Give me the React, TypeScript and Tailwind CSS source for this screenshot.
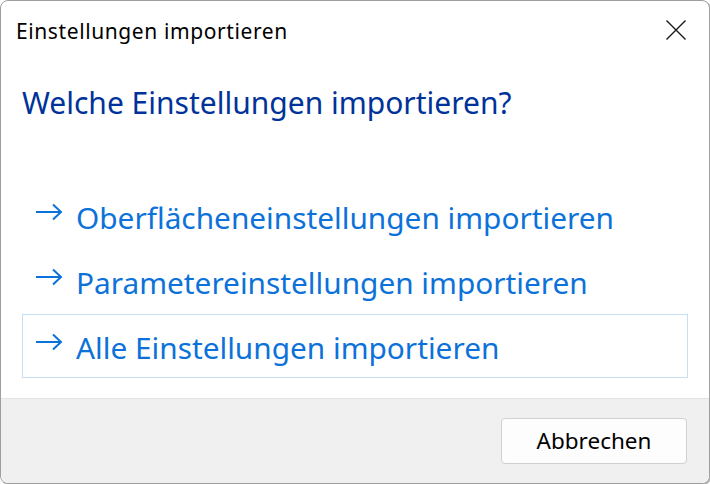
const options = [
  "Oberflächeneinstellungen importieren",
  "Parametereinstellungen importieren",
  "Alle Einstellungen importieren",
];

function Arrow() {
  return (
    <svg width="28" height="20" viewBox="0 0 28 20" className="-mt-[8px] shrink-0" fill="none">
      <path d="M1 10H26M18 2.5L26 10L18 17.5" stroke="currentColor" strokeWidth="2" />
    </svg>
  );
}

function CloseIcon() {
  return (
    <svg width="20" height="20" viewBox="0 0 20 20" fill="none" className="-mt-[3px]">
      <path d="M0.5 0.5L19.5 19.5M19.5 0.5L0.5 19.5" stroke="#1a1a1a" strokeWidth="1.4" />
    </svg>
  );
}

export default function App() {
  return (
    <div className="h-[484px] w-[710px] bg-white font-['Noto_Sans',sans-serif]">
      <div className="flex h-full flex-col overflow-hidden rounded-[8px] border border-[#9e9e9e] bg-white shadow-[1px_1px_0_#b8b8b8]">
        <div className="flex h-[61px] shrink-0 items-center justify-between pl-[15px] pr-[23px]">
          <span className="text-[21px] tracking-[0.6px] text-black">Einstellungen importieren</span>
          <CloseIcon />
        </div>
        <div className="flex-1 px-[21px]">
          <h1 className="mt-[17px] text-[30px] leading-[48px] text-[#003399]">
            Welche Einstellungen importieren?
          </h1>
          <div className="mt-[57px] flex flex-col gap-[1px]">
            {options.map((label, i) => (
              <div
                key={label}
                className={`flex h-[64px] items-center gap-[13px] border pl-[12px] text-[#0c72d9] ${
                  i === 2 ? "border-[#c5def3]" : "border-transparent"
                }`}
              >
                <Arrow />
                <span className="mt-[4px] text-[29.8px] leading-[40px]">{label}</span>
              </div>
            ))}
          </div>
        </div>
        <div className="flex h-[85px] shrink-0 items-center justify-end border-t border-[#e3e3e3] bg-[#f0f0f0] pr-[22px]">
          <button className="h-[46px] w-[186px] rounded-[4px] border border-[#d0d0d0] bg-[#fdfdfd] text-[22.5px] text-black">
            Abbrechen
          </button>
        </div>
      </div>
    </div>
  );
}
